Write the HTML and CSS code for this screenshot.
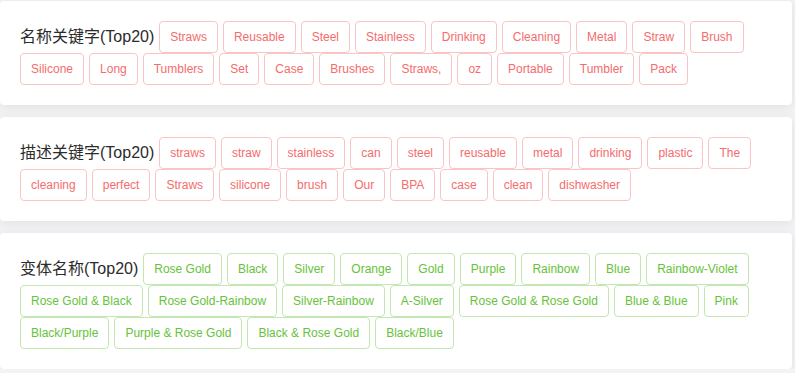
FILE: index.html
```html
<!DOCTYPE html>
<html lang="zh">
<head>
<meta charset="utf-8">
<link rel="stylesheet" href="styles.css">
</head>
<body>
<div class="page">
  <div class="card">
    <div class="row">
      <span class="title">名称关键字(Top20)</span>
      <span class="tag red">Straws</span>
      <span class="tag red">Reusable</span>
      <span class="tag red">Steel</span>
      <span class="tag red">Stainless</span>
      <span class="tag red">Drinking</span>
      <span class="tag red">Cleaning</span>
      <span class="tag red">Metal</span>
      <span class="tag red">Straw</span>
      <span class="tag red">Brush</span>
      <span class="tag red">Silicone</span>
      <span class="tag red">Long</span>
      <span class="tag red">Tumblers</span>
      <span class="tag red">Set</span>
      <span class="tag red">Case</span>
      <span class="tag red">Brushes</span>
      <span class="tag red">Straws,</span>
      <span class="tag red">oz</span>
      <span class="tag red">Portable</span>
      <span class="tag red">Tumbler</span>
      <span class="tag red">Pack</span>
    </div>
  </div>
  <div class="card">
    <div class="row">
      <span class="title">描述关键字(Top20)</span>
      <span class="tag red">straws</span>
      <span class="tag red">straw</span>
      <span class="tag red">stainless</span>
      <span class="tag red">can</span>
      <span class="tag red">steel</span>
      <span class="tag red">reusable</span>
      <span class="tag red">metal</span>
      <span class="tag red">drinking</span>
      <span class="tag red">plastic</span>
      <span class="tag red">The</span>
      <span class="tag red">cleaning</span>
      <span class="tag red">perfect</span>
      <span class="tag red">Straws</span>
      <span class="tag red">silicone</span>
      <span class="tag red">brush</span>
      <span class="tag red">Our</span>
      <span class="tag red">BPA</span>
      <span class="tag red">case</span>
      <span class="tag red">clean</span>
      <span class="tag red">dishwasher</span>
    </div>
  </div>
  <div class="card">
    <div class="row">
      <span class="title">变体名称(Top20)</span>
      <span class="tag green">Rose Gold</span>
      <span class="tag green">Black</span>
      <span class="tag green">Silver</span>
      <span class="tag green">Orange</span>
      <span class="tag green">Gold</span>
      <span class="tag green">Purple</span>
      <span class="tag green">Rainbow</span>
      <span class="tag green">Blue</span>
      <span class="tag green">Rainbow-Violet</span>
      <span class="tag green">Rose Gold &amp; Black</span>
      <span class="tag green">Rose Gold-Rainbow</span>
      <span class="tag green">Silver-Rainbow</span>
      <span class="tag green">A-Silver</span>
      <span class="tag green">Rose Gold &amp; Rose Gold</span>
      <span class="tag green">Blue &amp; Blue</span>
      <span class="tag green">Pink</span>
      <span class="tag green">Black/Purple</span>
      <span class="tag green">Purple &amp; Rose Gold</span>
      <span class="tag green">Black &amp; Rose Gold</span>
      <span class="tag green">Black/Blue</span>
    </div>
  </div>
</div>
</body>
</html>
```

FILE: styles.css
```css
html, body {
  margin: 0;
  padding: 0;
  background: #f3f3f5;
  font-family: "Liberation Sans", Arial, "Noto Sans CJK SC", sans-serif;
}
.page {
  padding: 1px 3px 0 0;
  display: flex;
  flex-direction: column;
  gap: 12px;
}
.card {
  background: #fff;
  border-radius: 4px;
  box-shadow: 0 2px 12px 0 rgba(0, 0, 0, 0.08);
  padding: 20px;
}
.row {
  display: flex;
  flex-wrap: wrap;
  align-items: center;
  column-gap: 5px;
  row-gap: 0;
}
.title {
  font-size: 16px;
  color: #2b2b2b;
  line-height: 32px;
  font-family: "Liberation Sans", Arial, "Noto Sans CJK SC", sans-serif;
}
.tag {
  box-sizing: border-box;
  height: 32px;
  line-height: 30px;
  padding: 0 10px;
  font-size: 12px;
  border: 1px solid;
  border-radius: 4px;
  background: #fff;
  white-space: nowrap;
}
.red {
  color: #f56c6c;
  border-color: #fbc4c4;
}
.green {
  color: #67c23a;
  border-color: #c2e7b0;
}
```
